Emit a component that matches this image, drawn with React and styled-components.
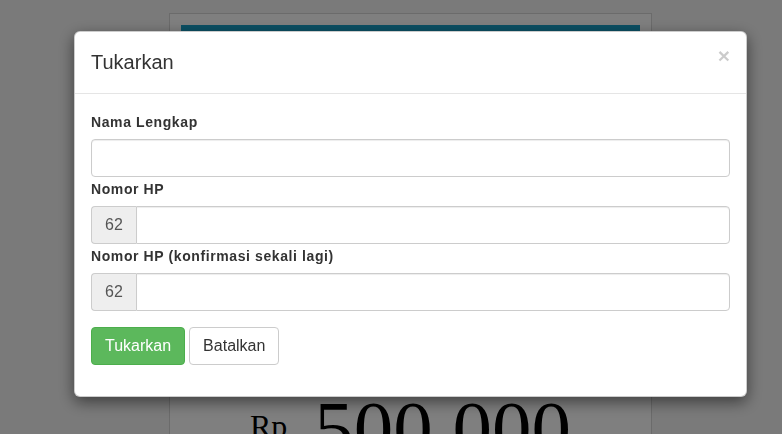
import React from "react";
import styled, { createGlobalStyle } from "styled-components";

const GlobalStyle = createGlobalStyle`
  html, body {
    margin: 0;
    padding: 0;
    height: 100%;
    overflow: hidden;
  }
  body {
    background: #f4f4f4;
    font-family: "Liberation Sans", Arial, Helvetica, sans-serif;
    color: #333;
  }
`;

const Page = styled.div`
  padding: 13px 0 0 169px;
`;

const Card = styled.div`
  width: 459px;
  min-height: 500px;
  background: #fff;
  border: 1px solid #d6d6d6;
  padding: 11px;
`;

const Banner = styled.div`
  height: 364px;
  background: #179fc7;
`;

const Price = styled.div`
  display: flex;
  justify-content: center;
  align-items: flex-start;
  gap: 27px;
  font-family: "Liberation Serif", "Times New Roman", serif;
  color: #000;
  line-height: 1;
`;

const Currency = styled.span`
  font-size: 32px;
  margin-top: 21px;
`;

const Amount = styled.span`
  font-size: 79px;
`;

const Backdrop = styled.div`
  position: fixed;
  inset: 0;
  background: rgba(0, 0, 0, 0.5);
  padding: 31px 0 0 74px;
`;

const Modal = styled.div`
  width: 671px;
  background: #fff;
  border: 1px solid rgba(0, 0, 0, 0.2);
  border-radius: 6px;
  box-shadow: 0 5px 15px rgba(0, 0, 0, 0.5);
`;

const Header = styled.div`
  display: flex;
  justify-content: space-between;
  align-items: flex-start;
  padding: 15px 16px;
  border-bottom: 1px solid #e5e5e5;
`;

const Title = styled.h4`
  margin: 0;
  font-size: 20px;
  font-weight: normal;
  line-height: 31px;
  color: #333;
`;

const Close = styled.button`
  border: 0;
  background: transparent;
  padding: 0;
  margin-top: -2px;
  font-family: inherit;
  font-size: 21px;
  font-weight: bold;
  line-height: 1;
  color: #000;
  opacity: 0.2;
  cursor: pointer;
`;

const Body = styled.div`
  padding: 18px 16px 31px;
`;

const Group = styled.div`
  & + & {
    margin-top: 2px;
  }
`;

const Label = styled.label`
  display: block;
  margin-bottom: 7px;
  font-size: 14px;
  font-weight: bold;
  line-height: 20px;
  letter-spacing: 0.6px;
  color: #333;
`;

const Input = styled.input`
  display: block;
  box-sizing: border-box;
  width: 100%;
  height: 38px;
  padding: 6px 12px;
  font-family: inherit;
  font-size: 16px;
  color: #555;
  background: #fff;
  border: 1px solid #ccc;
  border-radius: ${p => (p.$joined ? "0 4px 4px 0" : "4px")};
  box-shadow: inset 0 1px 1px rgba(0, 0, 0, 0.075);
  outline: none;
`;

const InputGroup = styled.div`
  display: flex;
`;

const Addon = styled.span`
  display: flex;
  align-items: center;
  justify-content: center;
  box-sizing: border-box;
  height: 38px;
  padding: 0 13px;
  font-size: 16px;
  color: #555;
  background: #eee;
  border: 1px solid #ccc;
  border-right: 0;
  border-radius: 4px 0 0 4px;
`;

const Actions = styled.div`
  display: flex;
  gap: 4px;
  margin-top: 16px;
`;

const Button = styled.button`
  box-sizing: border-box;
  height: 38px;
  padding: 0 13px;
  font-family: inherit;
  font-size: 16px;
  border-radius: 4px;
  border: 1px solid ${p => (p.$primary ? "#4cae4c" : "#ccc")};
  background: ${p => (p.$primary ? "#5cb85c" : "#fff")};
  color: ${p => (p.$primary ? "#fff" : "#333")};
  cursor: pointer;
`;

const fields = [
  { label: "Nama Lengkap" },
  { label: "Nomor HP", prefix: "62" },
  { label: "Nomor HP (konfirmasi sekali lagi)", prefix: "62" },
];

export default function App() {
  return (
    <>
      <GlobalStyle />
      <Page>
        <Card>
          <Banner />
          <Price>
            <Currency>Rp</Currency>
            <Amount>500.000</Amount>
          </Price>
        </Card>
      </Page>
      <Backdrop>
        <Modal>
          <Header>
            <Title>Tukarkan</Title>
            <Close>×</Close>
          </Header>
          <Body>
            {fields.map(f => (
              <Group key={f.label}>
                <Label>{f.label}</Label>
                {f.prefix ? (
                  <InputGroup>
                    <Addon>{f.prefix}</Addon>
                    <Input $joined type="text" />
                  </InputGroup>
                ) : (
                  <Input type="text" />
                )}
              </Group>
            ))}
            <Actions>
              <Button $primary>Tukarkan</Button>
              <Button>Batalkan</Button>
            </Actions>
          </Body>
        </Modal>
      </Backdrop>
    </>
  );
}
